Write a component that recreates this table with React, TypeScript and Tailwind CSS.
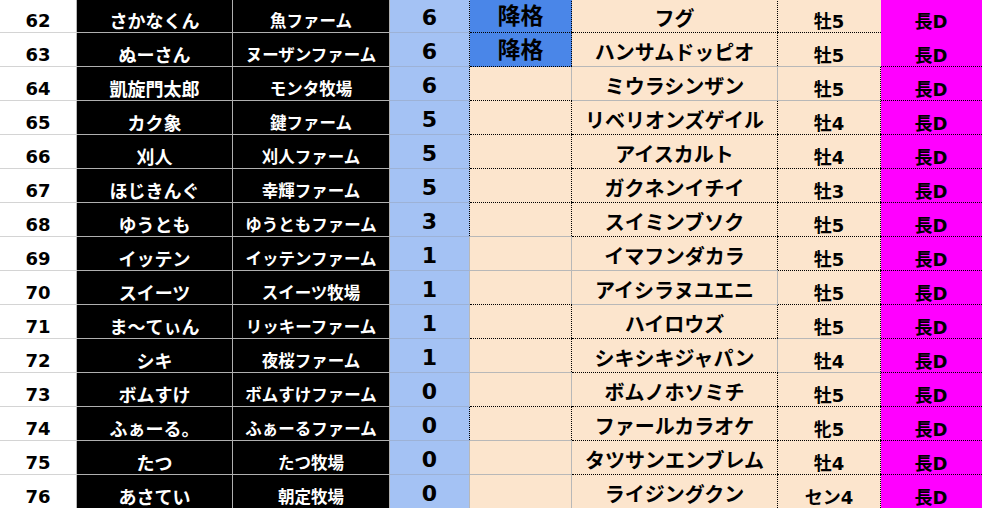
import React from 'react';

type Row = [number, string, string, number, string, string, string, string];

// [no, owner, farm, pts, note, horse, sex/age, borders: v45 c5b v56 c6b v67 c7b v78 c8b]
const rows: Row[] = [
  [62, 'さかなくん', '魚ファーム', 6, '降格', 'フグ', '牡5', 'ddddddnn'],
  [63, 'ぬーさん', 'ヌーザンファーム', 6, '降格', 'ハンサムドッピオ', '牡5', 'dddgdgnd'],
  [64, '凱旋門太郎', 'モンタ牧場', 6, '', 'ミウラシンザン', '牡5', 'ddggggdd'],
  [65, 'カク象', '鍵ファーム', 5, '', 'リベリオンズゲイル', '牡4', 'dddddddd'],
  [66, '刈人', '刈人ファーム', 5, '', 'アイスカルト', '牡4', 'dddddddd'],
  [67, 'ほじきんぐ', '幸輝ファーム', 5, '', 'ガクネンイチイ', '牡3', 'dddddddd'],
  [68, 'ゆうとも', 'ゆうともファーム', 3, '', 'スイミンブソク', '牡5', 'dgdddddd'],
  [69, 'イッテン', 'イッテンファーム', 1, '', 'イマフンダカラ', '牡5', 'ggggdddd'],
  [70, 'スイーツ', 'スイーツ牧場', 1, '', 'アイシラヌユエニ', '牡5', 'gdgggddd'],
  [71, 'ま〜てぃん', 'リッキーファーム', 1, '', 'ハイロウズ', '牡5', 'gddddgdd'],
  [72, 'シキ', '夜桜ファーム', 1, '', 'シキシキジャパン', '牡4', 'ggddggdd'],
  [73, 'ボムすけ', 'ボムすけファーム', 0, '', 'ボムノホソミチ', '牡5', 'gdgddddd'],
  [74, 'ふぁーる。', 'ふぁーるファーム', 0, '', 'ファールカラオケ', '牝5', 'dgdddddd'],
  [75, 'たつ', 'たつ牧場', 0, '', 'タツサンエンブレム', '牡4', 'gggddddd'],
  [76, 'あさてい', '朝定牧場', 0, '', 'ライジングクン', 'セン4', 'ggggdddg'],
];

const S: Record<string, string> = {
  d: 'border-dotted border-black',
  g: 'border-solid border-[#b8b8b8]',
  n: 'border-solid border-transparent',
};

const font = "font-['DejaVu_Sans','Noto_Sans_CJK_JP',sans-serif] font-bold";

function Cell({ w, bottom, right, bg, className, children }: {
  w: string; bottom: string; right: string; bg: string; className: string; children?: React.ReactNode;
}) {
  return (
    <div className={`${w} ${bg} h-full shrink-0 border-b ${bottom}`}>
      <div className={`h-full border-r ${right} flex justify-center ${className}`}>{children}</div>
    </div>
  );
}

export default function App() {
  return (
    <div className={`w-[982px] h-[508px] overflow-hidden bg-white ${font}`}>
      <div className="-mt-px flex flex-col">
        {rows.map(([no, owner, farm, pts, note, horse, sex, b]) => (
          <div key={no} className="flex h-[34px]">
            <Cell w="w-[77px]" bg="bg-white" bottom="border-solid border-[#d4d4d4]" right="border-solid border-[#b8b8b8]"
              className="items-center pt-[10px] text-[18px] text-black">{no}</Cell>
            <Cell w="w-[156px]" bg="bg-black" bottom="border-solid border-[#b0b0b0]" right="border-solid border-[#b0b0b0]"
              className="items-center pt-[12px] text-[18px] text-white">{owner}</Cell>
            <Cell w="w-[157px]" bg="bg-black" bottom="border-solid border-[#b0b0b0]" right="border-solid border-[#b0b0b0]"
              className="items-center pt-[13px] text-[16.5px] text-white">{farm}</Cell>
            <Cell w="w-[80px]" bg="bg-[#a4c2f4]" bottom="border-solid border-[#9db2d6]" right={S[b[0]]}
              className="items-center pt-[3px] text-[22px] text-black">{pts}</Cell>
            <Cell w="w-[102px]" bg={note ? 'bg-[#4a86e8]' : 'bg-[#fce5cd]'} bottom={S[b[1]]} right={S[b[2]]}
              className="items-center pt-[1px] text-[23px] text-black">{note}</Cell>
            <Cell w="w-[206px]" bg="bg-[#fce5cd]" bottom={S[b[3]]} right={S[b[4]]}
              className="items-center pt-[6px] text-[20px] text-black">{horse}</Cell>
            <Cell w="w-[103px]" bg="bg-[#fce5cd]" bottom={S[b[5]]} right={S[b[6]]}
              className="items-center pt-[11px] text-[18px] text-black">{sex}</Cell>
            <Cell w="w-[101px]" bg="bg-[#ff00ff]" bottom={S[b[7]]} right="border-solid border-transparent"
              className="items-center pt-[11px] text-[18px] text-black">長D</Cell>
          </div>
        ))}
      </div>
    </div>
  );
}
